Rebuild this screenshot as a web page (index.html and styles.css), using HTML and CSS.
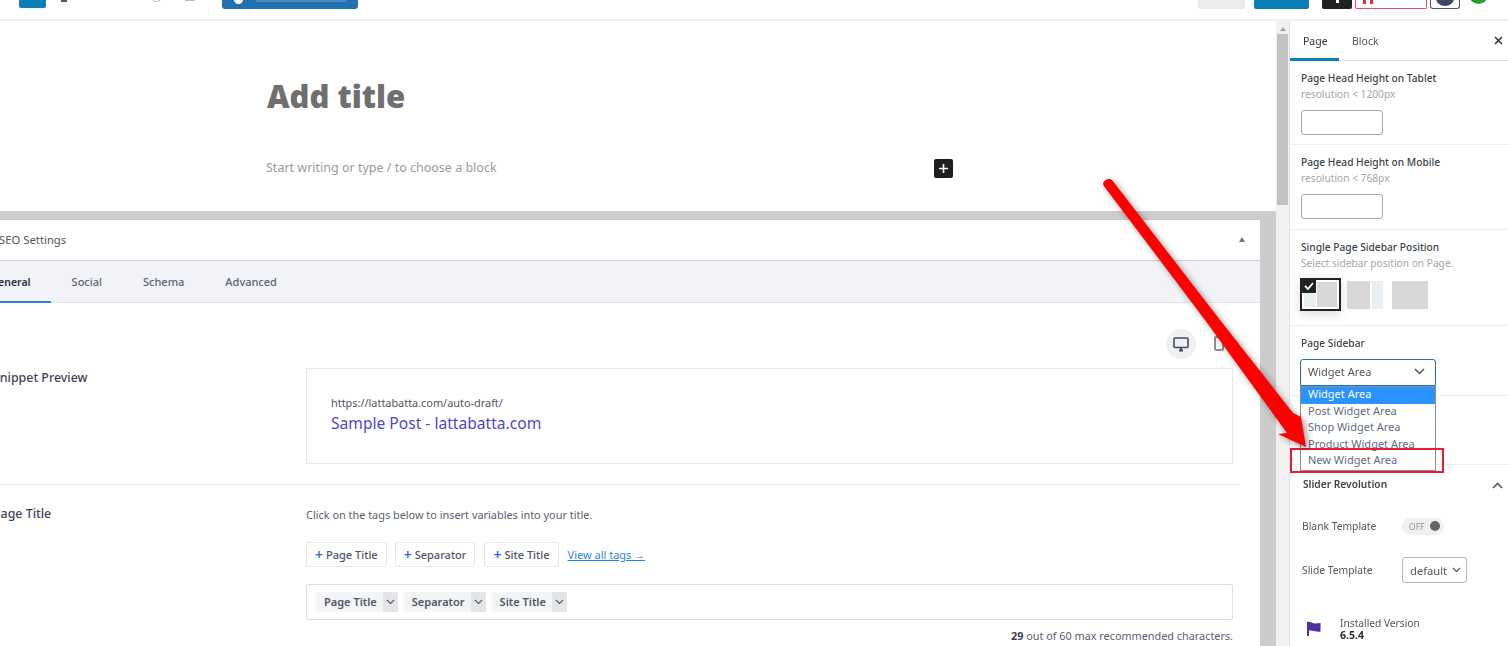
FILE: index.html
```html
<!DOCTYPE html>
<html lang="en">
<head>
<meta charset="utf-8">
<title>Edit Page</title>
<link rel="stylesheet" href="styles.css">
</head>
<body>
<header class="topbar">
  <span class="tb tb-logo"></span>
  <span class="tb tb-dash"></span>
  <span class="tb tb-circle"></span>
  <span class="tb tb-square"></span>
  <span class="tb tb-edit"><i></i><em></em></span>
  <span class="tb tb-preview"></span>
  <span class="tb tb-publish"></span>
  <span class="tb tb-black"><i></i></span>
  <span class="tb tb-red"><i></i><i></i></span>
  <span class="tb tb-outline"><i></i></span>
  <span class="tb tb-green"></span>
</header>
<div class="main">
  <section class="editor">
    <div class="canvas">
      <h1 class="post-title">Add title</h1>
      <div class="appender">
        <p class="placeholder">Start writing or type / to choose a block</p>
        <span class="add-block"><svg width="11" height="11" viewBox="0 0 11 11"><path d="M5.5 1v9M1 5.5h9" stroke="#fff" stroke-width="1.6" fill="none"/></svg></span>
      </div>
    </div>
    <div class="meta-wrap">
      <div class="metabox">
        <div class="meta-head"><span>SEO Settings</span><i class="caret-up"></i></div>
        <nav class="meta-tabs">
          <span class="meta-tab active">General</span>
          <span class="meta-tab">Social</span>
          <span class="meta-tab">Schema</span>
          <span class="meta-tab">Advanced</span>
        </nav>
        <div class="devices">
          <span class="device-on"><svg width="16" height="15" viewBox="0 0 16 15"><rect x="1" y="1" width="14" height="9.5" rx="1" fill="none" stroke="#434960" stroke-width="1.6"/><path d="M6 13.5h4M8 11v2" stroke="#434960" stroke-width="2"/></svg></span>
          <span class="device-tablet"></span>
        </div>
        <div class="row row-snippet">
          <h3 class="row-label">Snippet Preview</h3>
          <div class="snippet">
            <p class="snippet-url">https://lattabatta.com/auto-draft/</p>
            <p class="snippet-title">Sample Post - lattabatta.com</p>
          </div>
        </div>
        <div class="row row-title">
          <h3 class="row-label">Page Title</h3>
          <div>
            <p class="hint">Click on the tags below to insert variables into your title.</p>
            <div class="tag-row">
              <span class="tag-btn"><b>+</b>Page Title</span>
              <span class="tag-btn"><b>+</b>Separator</span>
              <span class="tag-btn"><b>+</b>Site Title</span>
              <a class="tag-link">View all tags →</a>
            </div>
            <div class="tag-input">
              <span class="chip">Page Title<i><svg width="9" height="6" viewBox="0 0 9 6"><path d="M1 1l3.5 3.5L8 1" stroke="#555d66" stroke-width="1.2" fill="none"/></svg></i></span>
              <span class="chip">Separator<i><svg width="9" height="6" viewBox="0 0 9 6"><path d="M1 1l3.5 3.5L8 1" stroke="#555d66" stroke-width="1.2" fill="none"/></svg></i></span>
              <span class="chip">Site Title<i><svg width="9" height="6" viewBox="0 0 9 6"><path d="M1 1l3.5 3.5L8 1" stroke="#555d66" stroke-width="1.2" fill="none"/></svg></i></span>
            </div>
            <p class="counter"><b>29</b> out of 60 max recommended characters.</p>
          </div>
        </div>
      </div>
    </div>
  </section>
  <div class="scrollbar">
    <i class="scroll-up"></i>
    <span class="thumb"></span>
  </div>
  <aside class="sidebar">
    <div class="side-tabs">
      <span class="side-tab active">Page</span>
      <span class="side-tab">Block</span>
      <svg class="side-close" width="9" height="9" viewBox="0 0 9 9"><path d="M1 1l7 7M8 1l-7 7" stroke="#333" stroke-width="1.6"/></svg>
    </div>
    <div class="panel panel-a">
      <h4 class="panel-label">Page Head Height on Tablet</h4>
      <p class="panel-sub">resolution &lt; 1200px</p>
      <span class="num-input"></span>
    </div>
    <div class="panel panel-b">
      <h4 class="panel-label">Page Head Height on Mobile</h4>
      <p class="panel-sub">resolution &lt; 768px</p>
      <span class="num-input"></span>
    </div>
    <div class="panel panel-c">
      <h4 class="panel-label">Single Page Sidebar Position</h4>
      <p class="panel-sub">Select sidebar position on Page.</p>
      <div class="layouts">
        <span class="layout selected">
          <span class="check"><svg width="10" height="8" viewBox="0 0 10 8"><path d="M1 4l3 3 5-6" stroke="#fff" stroke-width="1.8" fill="none"/></svg></span>
          <span class="l-side"></span><span class="l-main"></span>
        </span>
        <span class="layout right"><span class="l-main"></span><span class="l-side"></span></span>
        <span class="layout full"></span>
      </div>
    </div>
    <div class="panel panel-d">
      <h4 class="panel-label">Page Sidebar</h4>
      <div class="select-open">Widget Area<svg width="11" height="7" viewBox="0 0 11 7"><path d="M1 1l4.5 4.5L10 1" stroke="#50575e" stroke-width="1.5" fill="none"/></svg></div>
      <ul class="options">
        <li class="current">Widget Area</li>
        <li>Post Widget Area</li>
        <li>Shop Widget Area</li>
        <li>Product Widget Area</li>
        <li>New Widget Area</li>
      </ul>
    </div>
    <div class="slider-panel">
      <div class="slider-head"><h4 class="panel-label">Slider Revolution</h4><svg width="11" height="7" viewBox="0 0 11 7"><path d="M1 6l4.5-4.5L10 6" stroke="#50575e" stroke-width="1.6" fill="none"/></svg></div>
      <div class="slider-row toggle-row"><span>Blank Template</span><span class="toggle">OFF<i></i></span></div>
      <div class="slider-row tpl-row"><span>Slide Template</span><span class="mini-select">default<svg width="9" height="6" viewBox="0 0 9 6"><path d="M1 1l3.5 3.5L8 1" stroke="#50575e" stroke-width="1.2" fill="none"/></svg></span></div>
      <div class="version">
        <svg width="15" height="15" viewBox="0 0 15 15"><path d="M1 1C4 0 6 2.500 9 2.500L14.500 2v8.500C11 11.500 8 9 3 9.500V15H1z" fill="#4d2fa0"/></svg>
        <div><p class="v-label">Installed Version</p><p class="v-num">6.5.4</p></div>
      </div>
    </div>
  </aside>
</div>
<div class="highlight"></div>
<svg class="arrow" width="260" height="300" viewBox="0 0 260 300">
  <path d="M3.500 10.500C1.500 6.500 8 2 12 5L120 145L193 238L201 242L206 272L178 259L187 258L105 145Z" fill="#fe0000"/>
</svg>
</body>
</html>
```
FILE: styles.css
```css
* { box-sizing: border-box; }
html, body { margin: 0; padding: 0; }
body {
  width: 1508px;
  height: 646px;
  overflow: hidden;
  position: relative;
  background: #fff;
  font-family: "Noto Sans", "Open Sans", sans-serif;
  color: #3c434a;
  font-size: 11px;
  filter: blur(.35px);
}
h1, h3, h4, p, ul { margin: 0; padding: 0; }
li { list-style: none; }

/* top bar: its controls are cropped by the top of the picture */
.topbar {
  height: 21px;
  border-bottom: 2px solid #f0f0f0;
  display: flex;
  align-items: flex-start;
  overflow: hidden;
}
.tb { display: block; flex: none; position: relative; }
.tb-logo { width: 27px; height: 8px; margin-left: 19px; background: #0a7fb8; border-radius: 0 0 2px 2px; }
.tb-dash { width: 6px; height: 2px; margin-left: 15px; background: #555; }
.tb-circle { width: 13px; height: 13px; margin: -11px 0 0 83px; border: 1px solid #bbb; border-radius: 50%; }
.tb-square { width: 10px; height: 1px; margin-left: 22px; background: #bbb; }
.tb-edit { width: 136px; height: 9px; margin-left: 27px; background: #2271b1; border-radius: 0 0 3px 3px; }
.tb-edit i { position: absolute; left: 12px; top: -5px; width: 9px; height: 9px; border-radius: 50%; background: #fff; }
.tb-edit em { position: absolute; left: 34px; top: 0; width: 90px; height: 2px; background: #4c8cc0; }
.tb-preview { width: 47px; height: 9px; margin-left: 840px; background: #ebebeb; border-radius: 0 0 2px 2px; }
.tb-publish { width: 55px; height: 9px; margin-left: 9px; background: #0a7fb8; border-radius: 0 0 2px 2px; }
.tb-black { width: 30px; height: 9px; margin-left: 13px; background: #222; border-radius: 0 0 2px 2px; }
.tb-black i { position: absolute; left: 14px; top: 0; width: 3px; height: 3px; background: #fff; }
.tb-red { width: 72px; height: 9px; margin-left: 3px; border: 1px solid #e84a63; border-top: 0; border-radius: 0 0 2px 2px; }
.tb-red i { position: absolute; top: 0; width: 3px; height: 4px; background: #d9304e; left: 7px; }
.tb-red i + i { left: 14px; }
.tb-outline { width: 30px; height: 9px; margin-left: 3px; border: 1px solid #50566c; border-top: 0; border-radius: 0 0 3px 3px; }
.tb-outline i { position: absolute; left: 5px; top: -10px; width: 18px; height: 16px; border-radius: 50%; background: #3f4660; }
.tb-green { width: 19px; height: 19px; margin: -15px 0 0 9px; background: #1fa32d; border-radius: 50%; }

.main { display: flex; height: 625px; }
.editor { width: 1276px; flex: none; overflow: hidden; }
.canvas { height: 190px; padding: 52px 0 0 267px; background: #fff; }
.post-title {
  font-family: "Open Sans", sans-serif;
  font-size: 31px;
  font-weight: 800;
  line-height: 46px;
  color: #6f6f6f;
}
.appender { display: flex; align-items: center; margin-top: 39px; width: 687px; margin-left: -1px; justify-content: space-between; }
.placeholder { font-size: 12.500px; color: #9a9a9a; line-height: 20px; }
.add-block { width: 19px; height: 19px; background: #1e1e1e; border-radius: 2px; display: flex; align-items: center; justify-content: center; }

.meta-wrap { background: #ccc; padding: 9px 16px 0 0; margin-left: -30px; height: 435px; }
.metabox { background: #fff; height: 426px; }
.meta-head { height: 41px; padding: 0 15px 2px 29px; display: flex; align-items: center; justify-content: space-between; border-bottom: 1px solid #ccd0d4; font-size: 11.300px; color: #50575e; }
.caret-up { border: 3.500px solid transparent; border-top: 0; border-bottom: 5px solid #6d7278; }
.meta-tabs { height: 42px; display: flex; background: #f1f3f6; border-bottom: 1px solid #e2e4e7; }
.meta-tab { padding: 0 20.500px; line-height: 41px; color: #5d6478; font-size: 11px; font-weight: 500; }
.meta-tab.active { color: #2c3149; font-size: 10.500px; font-weight: 600; line-height: 42px; height: 42px; border-bottom: 2px solid #2a7de1; }

.devices { height: 65px; padding: 26px 36px 0 0; display: flex; justify-content: flex-end; align-items: flex-start; }
.device-on { width: 30px; height: 30px; border-radius: 50%; background: #eff0f1; display: flex; align-items: center; justify-content: center; }
.device-tablet { width: 10px; height: 15px; margin: 7px 0 0 18px; border: 2px solid #8a8f99; border-radius: 2px; }

.row { display: grid; grid-template-columns: 313px 927px; padding-left: 23px; }
.row-label { font-size: 12.400px; font-weight: 500; color: #3d4358; line-height: 18px; }
.row-snippet { padding-bottom: 20px; }
.row-snippet .row-label { margin-top: 1px; }
.snippet { height: 96px; padding: 25px 24px 0; border: 1px solid #e5e7eb; }
.snippet-url { font-size: 10.900px; line-height: 17px; color: #4f5560; }
.snippet-title { font-size: 15.600px; line-height: 25px; color: #4a47c9; }
.row-title { border-top: 1px solid #e9ebee; width: 1270px; padding-top: 20px; }
.hint { font-size: 10.900px; line-height: 20px; color: #585e6c; }
.tag-row { display: flex; align-items: center; margin-top: 17px; }
.tag-btn { height: 25px; padding: 0 8px; margin-right: 8px; border: 1px solid #e5e7eb; border-radius: 2px; display: flex; align-items: center; font-size: 11px; font-weight: 500; color: #4f5568; white-space: nowrap; }
.tag-btn + .tag-btn { margin-right: 9px; }
.tag-btn + .tag-btn + .tag-btn { margin-right: 8px; }
.tag-btn b { color: #1a6ce0; font-size: 14px; font-weight: 600; margin-right: 3px; line-height: 1; }
.tag-link { font-size: 11px; color: #2b82e8; text-decoration: underline; margin-left: 1px; }
.tag-input { height: 36px; margin-top: 17px; padding: 7px 9px; border: 1px solid #dcdfe6; border-radius: 2px; display: flex; gap: 6px; }
.chip { height: 20px; padding: 0 0 0 8px; background: #f3f4f6; border-radius: 2px; display: flex; align-items: center; font-size: 11px; line-height: 18px; font-weight: 600; color: #4f5568; white-space: nowrap; }
.chip i { width: 15px; height: 20px; margin-left: 6px; background: #e4e5e7; display: flex; align-items: center; justify-content: center; }
.counter { margin-top: 8px; text-align: right; font-size: 10.850px; line-height: 16px; color: #5a6070; }
.counter b { font-weight: 700; color: #3d4358; }

.scrollbar { width: 14px; flex: none; background: #f1f1f1; border-right: 1px solid #e4e4e4; position: relative; padding: 13px 1px 0 1px; }
.scroll-up { position: absolute; left: 4px; top: 6px; border: 3px solid transparent; border-top: 0; border-bottom: 4px solid #a3a3a3; }
.thumb { display: block; width: 11px; height: 171px; background: #c1c1c1; }

.sidebar { width: 218px; flex: none; background: #fff; }
.side-tabs { height: 40px; border-bottom: 1px solid #e2e4e7; display: flex; position: relative; }
.side-tab { width: 49px; height: 39px; padding-left: 13px; line-height: 40px; font-size: 10.500px; color: #50575e; }
.side-tab.active { color: #33373d; border-bottom: 3px solid #0a7fb8; height: 40px; }
.side-close { margin: 15px 5px 0 auto; }

.panel { padding: 0 10px 0 11px; border-bottom: 1px solid #eeeeee; }
.panel-label { font-size: 10.200px; font-weight: 500; color: #3c434a; line-height: 16px; }
.panel-sub { font-size: 10.200px; line-height: 16px; color: #a2a6ab; }
.num-input { display: block; width: 82px; height: 25px; margin-top: 8px; background: #fff; border: 1px solid #a4a9ae; border-radius: 3px; }
.panel-a { height: 84px; padding-top: 9px; }
.panel-b { height: 85px; padding-top: 9px; }
.panel-c { height: 96px; padding-top: 9px; }
.layouts { display: flex; align-items: center; margin-top: 7px; }
.layout { display: flex; position: relative; flex: none; }
.layout.selected { width: 41px; height: 33px; margin-left: -1px; padding: 2px; gap: 1px; border: 2px solid #222; box-shadow: 0 3px 10px rgba(0,0,0,.14); }
.selected .l-side { width: 12px; background: #e8eff3; }
.selected .l-main { flex: 1; background: #d8d8d8; }
.check { position: absolute; left: -1px; top: -1px; width: 15px; height: 14px; background: #222; display: flex; align-items: center; justify-content: center; }
.layout.right { width: 36px; height: 28px; margin-left: 6px; gap: 2px; }
.right .l-main { flex: 1; background: #d8d8d8; }
.right .l-side { width: 11px; background: #e8eff3; }
.layout.full { width: 36px; height: 28px; margin-left: 9px; background: #d8d8d8; }
.panel-d { height: 70px; padding-top: 9px; position: relative; }
.select-open { width: 136px; height: 27px; margin: 8px 0 0 -1px; padding: 0 10px 2px 7px; border: 1px solid #2271b1; border-radius: 3px 3px 0 0; display: flex; align-items: center; justify-content: space-between; font-size: 11px; color: #50575e; background: #fff; }
.options { position: absolute; left: 10px; top: 60px; width: 136px; height: 85px; border: 1px solid #8e8e8e; background: #fff; z-index: 1; }
.options li { height: 16.500px; line-height: 14.500px; padding-left: 7px; font-size: 11px; color: #5f6c85; }
.options li.current { background: #2a93ff; color: #fff; }
.slider-panel { margin-top: 68px; padding: 0 0 0 13px; position: relative; border-top: 1px solid #eee; }
.slider-head { height: 40px; padding: 11px 5px 0 0; display: flex; justify-content: space-between; align-items: flex-start; }
.slider-head .panel-label { font-weight: 600; }
.slider-head svg { margin-top: 6px; }
.slider-row { display: flex; align-items: center; font-size: 10.300px; color: #50575e; }
.slider-row > span:first-child { width: 100px; margin-left: -1px; }
.toggle-row { height: 34px; margin-top: 4px; }
.toggle { width: 42px; height: 17px; border-radius: 9px; background: #f0f0f0; display: flex; align-items: center; justify-content: space-between; padding: 0 4px 0 7px; font-size: 8.500px; color: #909090; }
.toggle i { width: 10px; height: 10px; border-radius: 50%; background: #666; }
.tpl-row { height: 26px; margin-top: 14px; }
.mini-select { width: 65px; height: 26px; border: 1px solid #b3b5b8; border-radius: 3px; display: flex; align-items: center; justify-content: space-between; padding: 0 5px 0 7px; font-size: 11.200px; color: #50575e; }
.version { display: flex; gap: 19px; margin-top: 34px; padding-left: 3px; align-items: flex-start; }
.version svg { margin-top: 4px; flex: none; }
.v-label { font-size: 10.200px; line-height: 12px; color: #50575e; }
.v-num { font-size: 10.500px; font-weight: 700; line-height: 13px; color: #2c2f33; }

/* annotations drawn over the screenshot */
.highlight { position: absolute; left: 1290px; top: 448px; width: 154px; height: 25px; border: 2px solid #ec1b32; z-index: 3; }
.arrow { position: absolute; left: 1100px; top: 175px; z-index: 4; filter: drop-shadow(3px 3px 3px rgba(0,0,0,.4)); overflow: visible; }
```
